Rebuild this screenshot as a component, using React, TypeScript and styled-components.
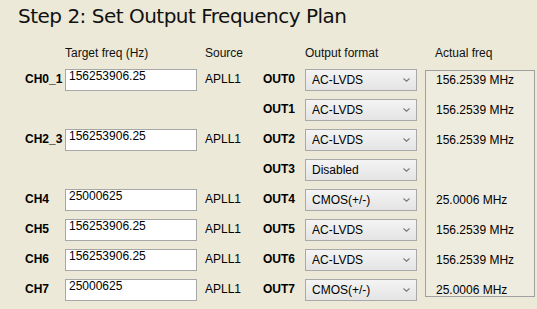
import React from 'react';
import styled, { createGlobalStyle } from 'styled-components';

const GlobalStyle = createGlobalStyle`
  html, body {
    margin: 0;
    padding: 0;
    background: #ece9d8;
  }
  body {
    font-family: "Liberation Sans", Arial, sans-serif;
    font-size: 12px;
    color: #000;
  }
`;

type Row = {
  ch?: string;
  target?: string;
  out: string;
  format: string;
  actual?: string;
};

const rows: Row[] = [
  { ch: 'CH0_1', target: '156253906.25', out: 'OUT0', format: 'AC-LVDS', actual: '156.2539 MHz' },
  { out: 'OUT1', format: 'AC-LVDS', actual: '156.2539 MHz' },
  { ch: 'CH2_3', target: '156253906.25', out: 'OUT2', format: 'AC-LVDS', actual: '156.2539 MHz' },
  { out: 'OUT3', format: 'Disabled' },
  { ch: 'CH4', target: '25000625', out: 'OUT4', format: 'CMOS(+/-)', actual: '25.0006 MHz' },
  { ch: 'CH5', target: '156253906.25', out: 'OUT5', format: 'AC-LVDS', actual: '156.2539 MHz' },
  { ch: 'CH6', target: '156253906.25', out: 'OUT6', format: 'AC-LVDS', actual: '156.2539 MHz' },
  { ch: 'CH7', target: '25000625', out: 'OUT7', format: 'CMOS(+/-)', actual: '25.0006 MHz' },
];

const formats = ['AC-LVDS', 'CMOS(+/-)', 'Disabled'];

function App() {
  return (
    <>
      <GlobalStyle />
      <Page>
        <Title>Step 2: Set Output Frequency Plan</Title>
        <PlanGrid>
          <span />
          <HeadCell>Target freq (Hz)</HeadCell>
          <HeadCell $indent={8}>Source</HeadCell>
          <span />
          <HeadCell>Output format</HeadCell>
          <HeadCell $indent={18}>Actual freq</HeadCell>

          <ActualBox>
            {rows.map((r) => (
              <ActualLine key={r.out}>{r.actual ?? ''}</ActualLine>
            ))}
          </ActualBox>

          {rows.map((r) => (
            <React.Fragment key={r.out}>
              <ChLabel>{r.ch ?? ''}</ChLabel>
              {r.target ? (
                <FreqInput type="text" defaultValue={r.target} />
              ) : (
                <span />
              )}
              <SourceCell>{r.ch ? 'APLL1' : ''}</SourceCell>
              <OutLabel>{r.out}</OutLabel>
              <SelectWrap>
                <FormatSelect defaultValue={r.format}>
                  {formats.map((f) => (
                    <option key={f}>{f}</option>
                  ))}
                </FormatSelect>
                <Chevron width="7" height="4" viewBox="0 0 7 4">
                  <path d="M0.5 0.5 L3.5 3.2 L6.5 0.5" fill="none" stroke="#7a7a7a" strokeWidth="1.1" />
                </Chevron>
              </SelectWrap>
            </React.Fragment>
          ))}
        </PlanGrid>
      </Page>
    </>
  );
}

export default App;

const Page = styled.div`
  width: 537px;
  height: 309px;
  overflow: hidden;
`;

const Title = styled.h1`
  margin: 0;
  height: 43px;
  padding: 4px 0 0 18px;
  box-sizing: border-box;
  font-family: "DejaVu Sans", Verdana, sans-serif;
  font-weight: 400;
  font-size: 20px;
  line-height: 24px;
  letter-spacing: -0.5px;
  color: #111;
`;

const PlanGrid = styled.div`
  display: grid;
  padding-left: 25px;
  grid-template-columns: 40px 132px 66px 42px 112px 118px;
  grid-template-rows: 21px repeat(8, 30px);
`;

const HeadCell = styled.div<{ $indent?: number }>`
  padding-left: ${(p) => p.$indent ?? 0}px;
  line-height: 20px;
  white-space: nowrap;
  color: #111;
`;

const ChLabel = styled.div`
  font-weight: 700;
  line-height: 30px;
  white-space: nowrap;
`;

const FreqInput = styled.input`
  align-self: center;
  width: 132px;
  height: 22px;
  margin: 1px 0 0;
  padding: 0 3px 8px;
  box-sizing: border-box;
  border: 1px solid #a7a7a7;
  background: #fff;
  font-family: "Liberation Sans", Arial, sans-serif;
  font-size: 12px;
  color: #000;
  outline: none;
`;

const SourceCell = styled.div`
  padding-left: 8px;
  line-height: 30px;
`;

const OutLabel = styled.div`
  font-weight: 700;
  line-height: 30px;
`;

const SelectWrap = styled.div`
  position: relative;
  align-self: center;
  height: 22px;
  margin-top: 1px;
`;

const FormatSelect = styled.select`
  appearance: none;
  width: 112px;
  height: 22px;
  margin: 0;
  padding: 0 0 0 6px;
  box-sizing: border-box;
  border: 1px solid #a9a9a9;
  border-radius: 0;
  background: linear-gradient(#f4f4f4, #e4e4e4);
  font-family: "Liberation Sans", Arial, sans-serif;
  font-size: 12px;
  color: #000;
  outline: none;
`;

const Chevron = styled.svg`
  position: absolute;
  right: 7px;
  top: 9px;
  pointer-events: none;
`;

const ActualBox = styled.div`
  grid-column: 6;
  grid-row: 2 / span 8;
  margin: 6px 0 7px 8px;
  width: 110px;
  box-sizing: border-box;
  border: 1px solid #a0a0a0;
  background: #eeebdf;
  padding-left: 10px;
`;

const ActualLine = styled.div`
  height: 30px;
  line-height: 18px;
  white-space: nowrap;
`;
